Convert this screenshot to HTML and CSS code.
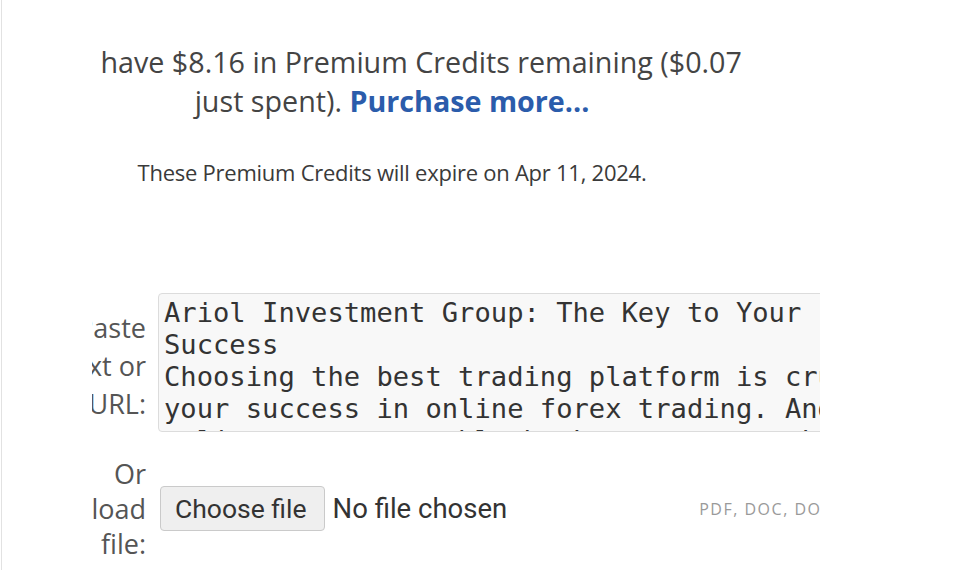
FILE: index.html
```html
<!DOCTYPE html>
<html lang="en">
<head>
  <meta charset="UTF-8" />
  <meta name="viewport" content="width=device-width, initial-scale=1.0"/>
  <title>Premium Credits</title>
  <link rel="stylesheet" href="styles.css">
</head>
<body>
  <div class="frame">
    <div class="viewport">
      <div class="credits">
        <p class="balance">You have $8.16 in Premium Credits remaining ($0.07<br>just spent). <a href="#">Purchase more...</a></p>
        <p class="expiry">These Premium Credits will expire on Apr 11, 2024.</p>
      </div>

      <div class="form">
        <label class="label label-top" for="text">Paste<br>text or<br>URL:</label>
        <textarea id="text" class="source" wrap="off">Ariol Investment Group: The Key to Your
Success
Choosing the best trading platform is crucial for
your success in online forex trading. And with so
online at a reputable broker you can make the most</textarea>

        <label class="label label-file" for="file">Or<br>load<br>file:</label>
        <div class="file-row">
          <input type="file" id="file" class="file-input">
          <label class="file-btn" for="file">Choose file</label>
          <span class="file-name">No file chosen</span>
          <span class="hint">PDF, DOC, DOCX, TXT, RTF</span>
        </div>
      </div>
    </div>
  </div>
</body>
</html>
```

FILE: styles.css
```css
body {
  margin: 0;
  background: white;
  font-family: "Open Sans", sans-serif;
  color: #444;
}
.frame {
  margin-left: 1px;
  border-left: 1px solid #e2e2e2;
  height: 570px;
}
.viewport {
  margin-left: 90px;
  width: 728px;
  height: 570px;
  overflow: hidden;
}
.credits {
  margin-left: -50px;
  width: 700px;
  text-align: center;
}
.balance {
  margin: 42px 0 0;
  font-size: 28.7px;
  line-height: 39px;
  white-space: nowrap;
}
.balance a {
  color: #2b5cab;
  font-weight: bold;
  text-decoration: none;
}
.expiry {
  margin: 38px 0 0;
  font-size: 22px;
  line-height: 29px;
  letter-spacing: -0.25px;
  color: #3a3a3a;
}
.form {
  display: grid;
  grid-template-columns: 90px 760px;
  column-gap: 12px;
  row-gap: 24px;
  margin: 106px 0 0 -36px;
}
.label {
  text-align: right;
  color: #555;
  font-size: 27px;
  white-space: nowrap;
}
.label-top {
  align-self: start;
  padding-top: 16px;
  line-height: 38px;
}
.label-file {
  align-self: center;
  line-height: 35px;
}
.source {
  box-sizing: border-box;
  height: 139px;
  width: 760px;
  margin: 0;
  padding: 3px 5px;
  border: 1px solid #dcdcdc;
  border-radius: 4px;
  background: #f8f8f8;
  color: #333;
  font-family: "DejaVu Sans Mono", monospace;
  font-size: 27.15px;
  line-height: 32px;
  resize: none;
  overflow: hidden;
}
.file-row {
  display: flex;
  align-items: center;
  font-family: Roboto, "Liberation Sans", sans-serif;
  font-size: 26.5px;
  color: #333;
}
.file-row > * {
  flex-shrink: 0;
  white-space: nowrap;
}
.file-input {
  display: none;
}
.file-btn {
  box-sizing: border-box;
  height: 45px;
  margin-left: 2px;
  padding: 0 17px 0 14px;
  display: flex;
  align-items: center;
  border: 1px solid #cacaca;
  border-radius: 4px;
  background: #efefef;
  cursor: pointer;
}
.file-name {
  margin-left: 8px;
  font-size: 27.5px;
}
.hint {
  margin-left: 192px;
  font-family: "Open Sans", sans-serif;
  font-size: 16px;
  letter-spacing: 1.5px;
  color: #9a9a9a;
}
```
